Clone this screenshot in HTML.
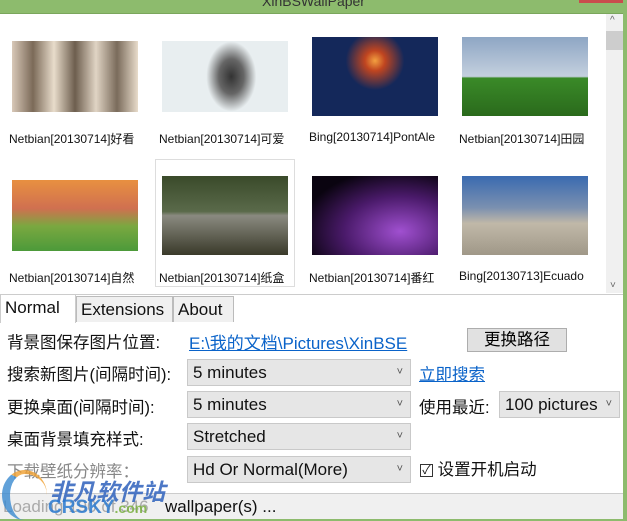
<!DOCTYPE html>
<html><head><meta charset="utf-8"><style>
*{margin:0;padding:0;box-sizing:border-box}
body{width:627px;height:521px;overflow:hidden;background:#8dbb6d;font-family:"Liberation Sans","Noto Sans CJK SC",sans-serif;position:relative}
.title{position:absolute;left:0;top:0;width:627px;height:13px;background:#8dbb6d;text-align:center;font-size:14px;line-height:2px;color:#333}
.close{position:absolute;left:579px;top:0;width:44px;height:3px;background:#c94d4d}
.gal{position:absolute;left:0;top:13px;width:623px;height:281px;background:#fff;border-top:1px solid #7aa65c}
.sb{position:absolute;left:606px;top:14px;width:17px;height:279px;background:#f0f0f0}
.thumb{position:absolute;width:126px}
.lbl{position:absolute;font-size:12px;color:#111;white-space:nowrap;width:132px;overflow:hidden}
.panel{position:absolute;left:0;top:294px;width:623px;height:199px;background:#fff;border-top:1px solid #ccc}
.tab{position:absolute;top:296px;height:26px;font-size:17px;line-height:26px;padding:0 4px;border:1px solid #bbb;border-bottom:none;background:#f0f0f0;color:#111}
.row{position:absolute;font-size:16.5px;color:#111;white-space:nowrap}
.sel{position:absolute;height:27px;background:#e6e6e6;border:1px solid #c9c9c9;font-size:17px;line-height:25px;padding-left:5px;color:#111}
.sel:after{content:"˅";position:absolute;right:7px;top:0;font-size:11px;color:#555}
a{color:#0a63c9;text-decoration:underline}
.status{position:absolute;left:0;top:493px;width:623px;height:26px;background:#f0f0f0;border-top:1px solid #ccc;font-size:17px;line-height:26px;color:#111}
</style></head><body>
<div class="title">XinBSWallPaper</div><div class="close"></div>
<div class="gal">
<div style="position:absolute;left:155px;top:145px;width:140px;height:128px;border:1px solid #ddd"></div>
<div class="thumb" style="left:12px;top:27px;height:71px;background:linear-gradient(90deg,#d8c8b8,#7b6a58,#e8dccb,#6d5e4e,#e0d4c4,#7a6b5b,#e8dccb);"></div>
<div class="thumb" style="left:162px;top:27px;height:71px;background:radial-gradient(ellipse 25px 35px at 55% 50%,#333,#666 50%,#e8eef0 100%)"></div>
<div class="thumb" style="left:312px;top:23px;height:79px;background:radial-gradient(circle at 50% 30%,#f3a040 0,#c04520 12%,#14285a 35%),linear-gradient(#14285a,#0e1b3a)"></div>
<div class="thumb" style="left:462px;top:23px;height:79px;background:linear-gradient(#8ea6c4,#c4d0de 50%,#3a8a28 52%,#2a6a1c)"></div>
<div class="lbl" style="left:9px;top:116px">Netbian[20130714]好看</div>
<div class="lbl" style="left:159px;top:116px">Netbian[20130714]可爱</div>
<div class="lbl" style="left:309px;top:116px">Bing[20130714]PontAle</div>
<div class="lbl" style="left:459px;top:116px">Netbian[20130714]田园</div>
<div class="thumb" style="left:12px;top:166px;height:71px;background:linear-gradient(#e89040,#d07050 40%,#7aa840 65%,#4c9a3a)"></div>
<div class="thumb" style="left:162px;top:162px;height:79px;background:linear-gradient(#3a4a2a,#5a6a4a 45%,#8a8a80 50%,#3a3a2a)"></div>
<div class="thumb" style="left:312px;top:162px;height:79px;background:radial-gradient(ellipse at 70% 70%,#a050d0,#4a1a6a 45%,#0a0410 80%)"></div>
<div class="thumb" style="left:462px;top:162px;height:79px;background:linear-gradient(#3a6ab0,#7a90b0 40%,#c0b8a8 60%,#a09888)"></div>
<div class="lbl" style="left:9px;top:255px">Netbian[20130714]自然</div>
<div class="lbl" style="left:159px;top:255px">Netbian[20130714]纸盒</div>
<div class="lbl" style="left:309px;top:255px">Netbian[20130714]番红</div>
<div class="lbl" style="left:459px;top:255px">Bing[20130713]Ecuado</div>
</div>
<div class="sb"><div style="position:absolute;top:17px;left:0;width:17px;height:19px;background:#cdcdcd"></div><div style="position:absolute;top:1px;left:4px;font-size:10px;color:#666">^</div><div style="position:absolute;bottom:2px;left:4px;font-size:10px;color:#666">˅</div></div>
<div class="panel"></div>
<div class="tab" style="left:0px;top:294px;height:29px;width:76px;background:#fff;border-color:#ccc">Normal</div>
<div class="tab" style="left:76px;width:97px">Extensions</div>
<div class="tab" style="left:173px;width:61px">About</div>
<div class="row" style="left:7px;top:329px">背景图保存图片位置:</div>
<div class="row" style="left:189px;top:329px;font-size:17px"><a>E:\我的文档\Pictures\XinBSE</a></div>
<div style="position:absolute;left:467px;top:328px;width:100px;height:24px;background:#e1e1e1;border:1px solid #adadad;font-size:16.5px;text-align:center;line-height:22px">更换路径</div>
<div class="row" style="left:7px;top:361px">搜索新图片(间隔时间):</div>
<div class="sel" style="left:187px;top:359px;width:224px">5 minutes</div>
<div class="row" style="left:419px;top:361px"><a>立即搜索</a></div>
<div class="row" style="left:7px;top:394px">更换桌面(间隔时间):</div>
<div class="sel" style="left:187px;top:391px;width:224px">5 minutes</div>
<div class="row" style="left:419px;top:394px">使用最近:</div>
<div class="sel" style="left:499px;top:391px;width:121px">100 pictures</div>
<div class="row" style="left:7px;top:426px">桌面背景填充样式:</div>
<div class="sel" style="left:187px;top:423px;width:224px">Stretched</div>
<div class="row" style="left:7px;top:458px;color:#888">下载壁纸分辨率：</div>
<div class="sel" style="left:187px;top:456px;width:224px">Hd Or Normal(More)</div>
<div class="row" style="left:420px;top:456px"><span style="display:inline-block;width:13px;height:13px;border:1px solid #333;font-size:12px;line-height:11px;text-align:center;vertical-align:1px">✓</span> 设置开机启动</div>
<div class="status"><span style="position:absolute;left:3px;color:#aaa">Loading 190 of 346</span><span style="position:absolute;left:165px">wallpaper(s) ...</span></div>
<div style="position:absolute;left:2px;top:470px;width:45px;height:50px;border-radius:50%;border-left:8px solid #3a8ad0;border-top:4px solid #f0a030;opacity:.8"></div>
<div style="position:absolute;left:50px;top:473px;font-size:23px;font-weight:bold;font-style:italic;color:#3a6ac0;opacity:.9">非凡软件站</div>
<div style="position:absolute;left:48px;top:497px;font-size:19px;font-weight:bold;color:#2a7ad0;opacity:.85">CRSKY<span style="color:#7ab040;font-size:14px">.com</span></div>
</body></html>
